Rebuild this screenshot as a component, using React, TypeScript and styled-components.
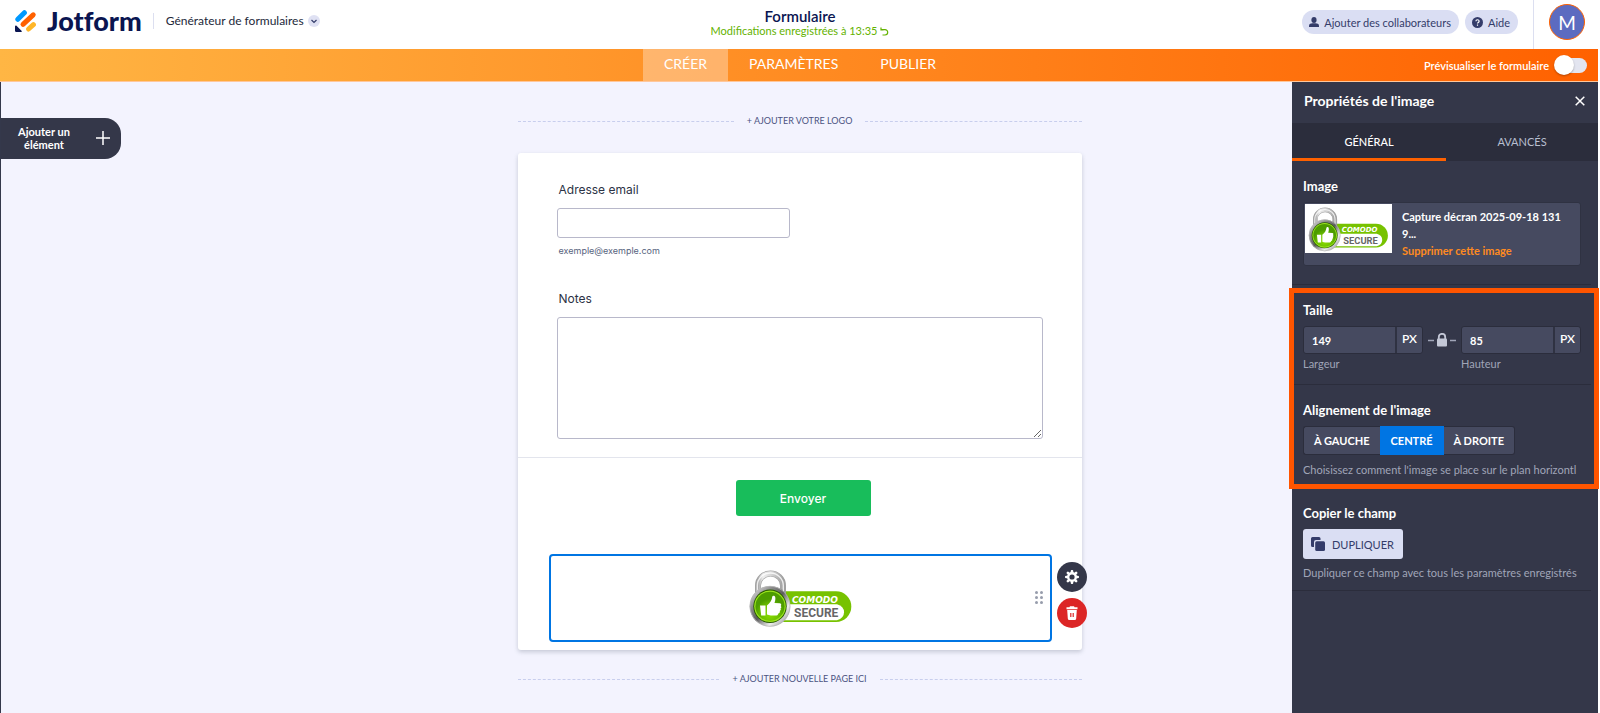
import React, { useState } from "react";
import styled, { createGlobalStyle } from "styled-components";

const ui = `Lato, "Liberation Sans", sans-serif`;
const formFont = `Inter, "Liberation Sans", sans-serif`;

const GlobalStyle = createGlobalStyle`
  *, *::before, *::after { box-sizing: border-box; }
  html, body, #root { min-height: 100vh; }
  body { margin: 0; background: #fff; color: #0a1551; font-family: ${ui}; }
  #root { display: flex; }
  button, input, textarea { font-family: inherit; margin: 0; }
  button { border: 0; padding: 0; cursor: pointer; }
  a { text-decoration: none; }
`;

const Page = styled.div`
  flex: 1;
  min-width: 0;
  display: flex;
  flex-direction: column;
  padding-right: 2px;
`;

/* Header */
const Header = styled.header`
  height: 49px;
  display: grid;
  grid-template-columns: 1fr auto 1fr;
  padding-left: 2px;
`;
const HeaderLeft = styled.div`
  display: flex;
  align-items: center;
  padding: 0 0 7px 13px;
`;
const Brand = styled.a`
  display: flex;
  align-items: center;
  gap: 10px;
  color: #0a1551;
  font-size: 27px;
  line-height: 32px;
  font-weight: 900;
  font-variant-ligatures: none;
`;
const ProductMenu = styled.button`
  display: flex;
  align-items: center;
  gap: 4px;
  margin-left: 11px;
  padding-left: 12px;
  border-left: 1px solid #dcdff0;
  background: none;
  color: #23283a;
  font-size: 12px;
  line-height: 16px;
`;
const HeaderCenter = styled.div`
  text-align: center;
  padding-top: 8px;
`;
const FormTitle = styled.h1`
  margin: 0;
  font-size: 15px;
  line-height: 17px;
  font-weight: 600;
`;
const SaveState = styled.p`
  display: flex;
  align-items: center;
  gap: 3px;
  margin: 0;
  color: #64b200;
  font-size: 11px;
  line-height: 12px;
`;
const HeaderRight = styled.div`
  display: flex;
  justify-content: flex-end;
  gap: 6px;
`;
const PillButton = styled.button`
  display: flex;
  align-items: center;
  gap: 5px;
  height: 24px;
  margin-top: 10px;
  padding: 0 8px 0 7px;
  border-radius: 12px;
  background: #dadef3;
  color: #343c6a;
  font-size: 11px;
`;
const Account = styled.div`
  margin-left: 9px;
  padding: 4px 13px 0 15px;
  border-left: 1px solid #dcdff0;
`;
const Avatar = styled.button`
  width: 36px;
  height: 36px;
  border: 1px solid #ff6100;
  border-radius: 50%;
  background: #5c6bc0;
  color: #fff;
  font-size: 19px;
`;

/* Navigation bar */
const NavBar = styled.nav`
  height: 33px;
  display: grid;
  grid-template-columns: 1fr auto 1fr;
  padding-left: 2px;
  border-bottom: 1px solid #ffc79b;
  background: linear-gradient(90deg, #ffb644, #ff6100);
`;
const NavTabs = styled.div`
  grid-column: 2;
  display: flex;
`;
const NavTab = styled.a<{ $active?: boolean }>`
  padding: 0 21px;
  background: ${(p) => (p.$active ? "rgba(255, 255, 255, 0.32)" : "transparent")};
  color: #fff;
  font-size: 14px;
  line-height: 30px;
`;
const Preview = styled.label`
  display: flex;
  align-items: center;
  justify-content: flex-end;
  gap: 6px;
  padding-right: 11px;
  color: #fff;
  font-size: 11px;
  font-weight: 600;
`;
const Toggle = styled.input`
  appearance: none;
  position: relative;
  width: 32px;
  height: 15px;
  border-radius: 8px;
  background: #e3e5f0;
  &::before {
    content: "";
    position: absolute;
    top: -3px;
    left: ${(p) => (p.checked ? "13px" : "-1px")};
    width: 20px;
    height: 20px;
    border-radius: 50%;
    background: #fff;
    box-shadow: 0 1px 2px rgba(0, 0, 0, 0.3);
  }
`;

/* Workspace */
const Workspace = styled.div`
  flex: 1;
  display: grid;
  grid-template-columns: minmax(306px, 1fr) minmax(0, 564px) minmax(306px, 1fr);
  border-left: 1px solid #34384b;
  background: #f3f3fe;
`;
const AddElement = styled.button`
  display: flex;
  align-items: center;
  justify-content: space-between;
  width: 120px;
  height: 41px;
  margin-top: 36px;
  padding: 0 11px 2px 16px;
  border-radius: 0 16px 16px 0;
  background: #343749;
  color: #fff;
  font-size: 11px;
  line-height: 13px;
  font-weight: 700;
  span { width: 54px; text-align: center; }
`;
const Canvas = styled.main`
  display: flex;
  flex-direction: column;
`;
const CanvasTop = styled.div`
  display: grid;
  padding-top: 33px;
`;
const DashedAction = styled.button`
  display: flex;
  align-items: center;
  gap: 13px;
  height: 12px;
  background: none;
  color: #4c5382;
  font-size: 9px;
  line-height: 12px;
  &::before, &::after {
    content: "";
    flex: 1;
    border-top: 1px dashed #c8ceed;
  }
`;
const FormCard = styled.form`
  position: relative;
  margin: 26px 0 23px;
  border-radius: 3px;
  background: #fff;
  box-shadow: 0 2px 4px rgba(84, 95, 111, 0.28);
  color: #2c3345;
  font-family: ${formFont};
`;
const Fields = styled.div`
  padding: 28px 39px 18px;
  border-bottom: 1px solid #e3e5ed;
`;
const FieldLabel = styled.label`
  display: block;
  padding-left: 2px;
  font-size: 12px;
  line-height: 18px;
`;
const EmailInput = styled.input`
  display: block;
  width: 233px;
  max-width: 100%;
  height: 30px;
  margin-top: 9px;
  border: 1px solid #b8b8ca;
  border-radius: 3px;
`;
const SubLabel = styled.p`
  margin: 7px 0 33px 2px;
  color: #57647e;
  font-size: 9px;
  line-height: 12px;
`;
const NotesArea = styled.textarea`
  display: block;
  width: 100%;
  height: 122px;
  margin-top: 9px;
  border: 1px solid #b8b8ca;
  border-radius: 3px;
`;
const SubmitRow = styled.div`
  padding-left: 7px;
`;
const Submit = styled.button`
  display: block;
  width: 135px;
  height: 36px;
  margin: 22px auto 38px;
  border-radius: 3px;
  background: #18bd5b;
  color: #fff;
  font-family: ${formFont};
  font-size: 12px;
  font-weight: 500;
`;
const SelectedImage = styled.div`
  display: grid;
  grid-template-columns: 1fr 110px 1fr;
  align-items: center;
  height: 88px;
  margin: 0 30px 0 31px;
  padding-bottom: 2px;
  border: 2px solid #0075e3;
  border-radius: 4px;
`;
const DragHandle = styled.svg`
  justify-self: end;
  margin-right: 6px;
`;
const CardEnd = styled.div`
  height: 8px;
`;
const ItemActions = styled.div`
  position: absolute;
  right: -5px;
  bottom: 22px;
  display: grid;
  gap: 6px;
`;
const RoundButton = styled.button<{ $danger?: boolean }>`
  display: grid;
  place-items: center;
  width: 30px;
  height: 30px;
  border-radius: 50%;
  background: ${(p) => (p.$danger ? "#dc2626" : "#343749")};
`;

/* Properties panel */
const Panel = styled.aside`
  justify-self: end;
  width: 306px;
  background: #343749;
  color: #fff;
`;
const PanelHeader = styled.div`
  display: flex;
  align-items: center;
  justify-content: space-between;
  height: 41px;
  padding: 0 13px 3px 12px;
`;
const PanelTitle = styled.h2`
  margin: 0;
  font-size: 14px;
  line-height: 18px;
  font-weight: 700;
`;
const CloseButton = styled.button`
  display: flex;
  background: none;
`;
const PanelTabs = styled.div`
  display: grid;
  grid-template-columns: 154px 1fr;
  background: #2b2d3c;
`;
const PanelTab = styled.button<{ $active?: boolean }>`
  height: 38px;
  padding-top: 1px;
  border-bottom: 3px solid ${(p) => (p.$active ? "#ff6100" : "transparent")};
  background: none;
  color: ${(p) => (p.$active ? "#fff" : "#b8bfd0")};
  font-size: 11px;
  font-weight: ${(p) => (p.$active ? 500 : 400)};
`;
const Section = styled.section<{ $end?: number }>`
  margin-right: 7px;
  padding: 17px 10px ${(p) => p.$end ?? 10}px 11px;
  border-bottom: 1px solid #2b2d3c;
`;
const SectionTitle = styled.h3`
  margin: 0 0 8px;
  font-size: 13px;
  line-height: 16px;
  font-weight: 700;
`;
const Hint = styled.p`
  margin: 0;
  color: #a0a5b8;
  font-size: 11px;
  line-height: 14px;
  white-space: nowrap;
`;
const FileCard = styled.div`
  display: flex;
  gap: 10px;
  height: 64px;
  padding: 1px;
  border: 1px solid #2f3242;
  border-radius: 3px;
  background: #464a60;
  font-size: 11px;
  line-height: 17px;
  font-weight: 700;
`;
const Thumb = styled.div`
  width: 87px;
  height: 49px;
  flex: none;
  background: #fff;
`;
const FileText = styled.div`
  flex: 1;
  padding-top: 4px;
`;
const RemoveLink = styled.a`
  display: block;
  color: #ff8a1f;
`;
const Highlighted = styled.div`
  position: relative;
  &::after {
    content: "";
    position: absolute;
    inset: 3px -1px -1px -3px;
    border: 5px solid #ff5500;
    pointer-events: none;
  }
`;
const SizeRow = styled.div`
  display: grid;
  grid-template-columns: 120px 1fr 120px;
`;
const SizeLabel = styled.label`
  display: block;
  margin-top: 3px;
  color: #a0a5b8;
  font-size: 11px;
  line-height: 14px;
`;
const Measure = styled.div`
  display: grid;
  grid-template-columns: 1fr 27px;
  height: 28px;
  border: 1px solid #2b2d3c;
  border-radius: 3px;
  background: #464a60;
`;
const Unit = styled.span`
  border-left: 2px solid #2f3242;
  text-align: center;
  font-size: 12px;
  line-height: 24px;
  font-weight: 600;
`;
const MeasureInput = styled.input`
  min-width: 0;
  padding: 0 8px;
  border: 0;
  background: none;
  color: #fff;
  font-size: 11px;
  font-weight: 700;
`;
const LockCell = styled.div`
  display: grid;
  place-items: center;
  height: 28px;
`;
const Segments = styled.div`
  display: flex;
  width: max-content;
  margin-bottom: 8px;
`;
const Segment = styled.button<{ $active?: boolean }>`
  height: 29px;
  padding: 0 10px;
  border: 1px solid ${(p) => (p.$active ? "#0075e3" : "#2b2d3c")};
  background: ${(p) => (p.$active ? "#0075e3" : "#464a60")};
  color: #fff;
  font-size: 11px;
  line-height: 24px;
  font-weight: 700;
  &:first-child { border-radius: 3px 0 0 3px; border-right: 0; }
  &:last-child { border-radius: 0 3px 3px 0; border-left: 0; }
`;
const Duplicate = styled.button`
  display: flex;
  align-items: center;
  gap: 7px;
  width: 100px;
  height: 30px;
  margin-bottom: 7px;
  padding-left: 8px;
  border-radius: 3px;
  background: #dadef3;
  color: #343c6a;
  font-size: 11px;
`;

function LogoMark() {
  return (
    <svg width="22" height="22" viewBox="0 0 22 22" fill="none" strokeLinecap="round" strokeWidth="5">
      <path d="M2.8 9.3 9.4 2.7" stroke="#0099ff" />
      <path d="M8 14.3 18.2 4.8" stroke="#ff6100" />
      <path d="M13.6 19 18.4 14.7" stroke="#ffb629" />
      <path d="M0 16.4c0-.9.9-1.3 1.5-.7l5 5c.6.6.2 1.4-.6 1.4H1.4C.6 22.1 0 21.5 0 20.8z" fill="#0a1551" />
    </svg>
  );
}

function SecureBadge({ width, height, id }: { width: number; height: number; id: string }) {
  return (
    <svg width={width} height={height} viewBox="0 0 110 63" role="img" aria-label="Comodo Secure">
      <defs>
        <linearGradient id={`${id}-steel`} x1="0" y1="0" x2="1" y2="1">
          <stop offset="0" stopColor="#f4f4f4" />
          <stop offset=".3" stopColor="#8b8b8b" />
          <stop offset=".5" stopColor="#5c5c5c" />
          <stop offset=".72" stopColor="#ededed" />
          <stop offset="1" stopColor="#777" />
        </linearGradient>
        <linearGradient id={`${id}-bow`} x1="0" x2="1">
          <stop offset="0" stopColor="#a5a5a5" />
          <stop offset=".2" stopColor="#f0f0f0" />
          <stop offset=".6" stopColor="#cfcfcf" />
          <stop offset="1" stopColor="#a0a0a0" />
        </linearGradient>
        <radialGradient id={`${id}-green`} cy=".75">
          <stop offset="0" stopColor="#8ee000" />
          <stop offset=".6" stopColor="#6dc000" />
          <stop offset="1" stopColor="#4d9c00" />
        </radialGradient>
      </defs>
      <path d="M25 25.3h66a15.3 15.3 0 0 1 0 30.6H25z" fill="#77c200" />
      <path d="M40 38.3h52q7 2 7 8t-7 8H40z" fill="#fff" />
      <path d="M13 29V19.5a12.500 12 0 0 1 25 0V29" fill="none" stroke="#a0a0a0" strokeWidth="6" />
      <path d="M13 29V19.5a12.500 12 0 0 1 25 0V29" fill="none" stroke={`url(#${id}-bow)`} strokeWidth="4.800" />
      <path d="M12.300 26V19.5a13 12.500 0 0 1 26 0V26" fill="none" stroke="#fff" strokeWidth="1.400" opacity=".8" />
      <circle cx="25" cy="40.3" r="20.3" fill={`url(#${id}-steel)`} />
      <circle cx="25" cy="40.3" r="20" fill="none" stroke="#b5b5b5" strokeWidth=".8" />
      <circle cx="25" cy="40.3" r="16.7" fill="#275a00" />
      <circle cx="25" cy="40.3" r="15.8" fill="#9be51c" />
      <circle cx="25" cy="40.3" r="14.6" fill={`url(#${id}-green)`} />
      <path d="M15 39.6h5.500v9.800h-4.300zM22 39.500c3.200-2.500 4.800-5.200 5.300-9 .3-1.400 2.600-1 2.900.5.400 2 .1 3.800-.7 6l5.300.3c1.600.2 1.800 1.800.8 2.600 1 .8.900 2-.2 2.600.8.9.4 2-.7 2.500.5 1-.1 2.200-1.400 2.500-.3 1.600-1.300 2.100-2.800 2.100-3 0-6.500-.2-8.500-1.100z" fill="#fff" />
      <text x="47" y="36.600" fill="#fff" fontFamily="DejaVu Sans, sans-serif" fontSize="9" fontWeight="700" fontStyle="italic">COMODO</text>
      <text x="49" y="50.800" fill="#666" fontFamily="Roboto, sans-serif" fontSize="12" fontWeight="700">SECURE</text>
    </svg>
  );
}

export default function App() {
  const [preview, setPreview] = useState(false);
  return (
    <>
      <GlobalStyle />
      <Page>
        <Header>
          <HeaderLeft>
            <Brand href="#"><LogoMark />Jotform</Brand>
            <ProductMenu type="button">
              Générateur de formulaires
              <svg width="12" height="12" viewBox="0 0 12 12">
                <circle cx="6" cy="6" r="6" fill="#dfe1f3" />
                <path d="m3.500 5 2.500 2.500L8.500 5" fill="none" stroke="#343c6a" strokeWidth="1.200" />
              </svg>
            </ProductMenu>
          </HeaderLeft>
          <HeaderCenter>
            <FormTitle>Formulaire</FormTitle>
            <SaveState>
              Modifications enregistrées à 13:35
              <svg width="9" height="9" viewBox="0 0 9 9" fill="none" stroke="#64b200" strokeWidth="1.200">
                <path d="M1 .5v2.500h2.500M1.200 2.600H5a2.700 2.700 0 0 1 0 5.400H2.500" />
              </svg>
            </SaveState>
          </HeaderCenter>
          <HeaderRight>
            <PillButton type="button">
              <svg width="10" height="11" viewBox="0 0 10 11" fill="#343c6a">
                <ellipse cx="5" cy="3" rx="2.600" ry="3" />
                <path d="M0 10V8.500C0 7 2 6.300 3.300 6.300h3.400C8 6.300 10 7 10 8.500V10z" />
              </svg>
              Ajouter des collaborateurs
            </PillButton>
            <PillButton type="button">
              <svg width="11" height="11" viewBox="0 0 11 11">
                <circle cx="5.500" cy="5.500" r="5.500" fill="#343c6a" />
                <path d="M3.900 4.300C3.900 2.200 7.100 2.300 7.100 4.200c0 1.200-1.600 1.200-1.600 2.300M5.500 7.500v1.200" fill="none" stroke="#fff" strokeWidth="1.200" />
              </svg>
              Aide
            </PillButton>
            <Account><Avatar type="button">M</Avatar></Account>
          </HeaderRight>
        </Header>
        <NavBar>
          <NavTabs>
            <NavTab href="#" $active>CRÉER</NavTab>
            <NavTab href="#">PARAMÈTRES</NavTab>
            <NavTab href="#">PUBLIER</NavTab>
          </NavTabs>
          <Preview>
            Prévisualiser le formulaire
            <Toggle type="checkbox" checked={preview} onChange={(e) => setPreview(e.target.checked)} />
          </Preview>
        </NavBar>
        <Workspace>
          <div>
            <AddElement type="button">
              <span>Ajouter un élément</span>
              <svg width="14" height="14" viewBox="0 0 14 14" stroke="#fff" strokeWidth="1.500"><path d="M7 0v14M0 7h14" /></svg>
            </AddElement>
          </div>
          <Canvas>
            <CanvasTop>
              <DashedAction type="button">+ AJOUTER VOTRE LOGO</DashedAction>
            </CanvasTop>
            <FormCard onSubmit={(e) => e.preventDefault()}>
              <Fields>
                <FieldLabel htmlFor="email">Adresse email</FieldLabel>
                <EmailInput id="email" type="email" />
                <SubLabel>exemple@exemple.com</SubLabel>
                <FieldLabel htmlFor="notes">Notes</FieldLabel>
                <NotesArea id="notes" />
              </Fields>
              <SubmitRow><Submit type="submit">Envoyer</Submit></SubmitRow>
              <SelectedImage>
                <span />
                <SecureBadge width={110} height={63} id="main" />
                <DragHandle width="9" height="13" viewBox="0 0 9 13" fill="#979dac">
                  {[1.5, 6.5, 11.5].map((y) => [1.5, 6.5].map((x) => <circle key={`${x}-${y}`} cx={x} cy={y} r="1.500" />))}
                </DragHandle>
              </SelectedImage>
              <CardEnd />
              <ItemActions>
                <RoundButton type="button" aria-label="Paramètres du champ">
                  <svg width="14" height="14" viewBox="0 0 14 14">
                    <path d="M7 1.200v11.600M1.200 7h11.600M2.900 2.900l8.200 8.200M11.100 2.900l-8.200 8.200" stroke="#fff" strokeWidth="2.600" strokeLinecap="round" />
                    <circle cx="7" cy="7" r="5" fill="#fff" />
                    <circle cx="7" cy="7" r="2.600" fill="#343749" />
                  </svg>
                </RoundButton>
                <RoundButton type="button" aria-label="Supprimer le champ" $danger>
                  <svg width="12" height="14" viewBox="0 0 12 14">
                    <path d="M4 .300h4l.6.900H11.500v2H.5v-2h2.900zM1.200 4h9.600l-.6 8.500q-.1 1.500-1.500 1.500H3.300q-1.400 0-1.500-1.500z" fill="#fff" />
                    <path d="M4.800 7v4M7.200 7v4" stroke="#dc2626" strokeWidth="1.200" />
                  </svg>
                </RoundButton>
              </ItemActions>
            </FormCard>
            <DashedAction type="button">+ AJOUTER NOUVELLE PAGE ICI</DashedAction>
          </Canvas>
          <Panel>
            <PanelHeader>
              <PanelTitle>Propriétés de l'image</PanelTitle>
              <CloseButton type="button" aria-label="Fermer">
                <svg width="10" height="10" viewBox="0 0 10 10" stroke="#fff" strokeWidth="1.500"><path d="m.7.7 8.600 8.600M9.300.7.7 9.300" /></svg>
              </CloseButton>
            </PanelHeader>
            <PanelTabs>
              <PanelTab type="button" $active>GÉNÉRAL</PanelTab>
              <PanelTab type="button">AVANCÉS</PanelTab>
            </PanelTabs>
            <Section $end={18}>
              <SectionTitle>Image</SectionTitle>
              <FileCard>
                <Thumb><SecureBadge width={86} height={49} id="thumb" /></Thumb>
                <FileText>
                  Capture décran 2025-09-18 131<br />9...
                  <RemoveLink href="#">Supprimer cette image</RemoveLink>
                </FileText>
              </FileCard>
            </Section>
            <Highlighted>
              <Section $end={13}>
                <SectionTitle>Taille</SectionTitle>
                <SizeRow>
                  <div>
                    <Measure><MeasureInput id="width" defaultValue="149" /><Unit>PX</Unit></Measure>
                    <SizeLabel htmlFor="width">Largeur</SizeLabel>
                  </div>
                  <LockCell>
                    <svg width="28" height="14" viewBox="0 0 28 14">
                      <path d="M0 7.500h6M22 7.500h6" stroke="#a0a5b8" strokeWidth="1.500" />
                      <path d="M10.800 6V4a3.200 3.200 0 0 1 6.400 0v2" fill="none" stroke="#c3c7d6" strokeWidth="1.800" />
                      <rect x="9" y="5.500" width="10" height="8" rx="1" fill="#c3c7d6" />
                    </svg>
                  </LockCell>
                  <div>
                    <Measure><MeasureInput id="height" defaultValue="85" /><Unit>PX</Unit></Measure>
                    <SizeLabel htmlFor="height">Hauteur</SizeLabel>
                  </div>
                </SizeRow>
              </Section>
              <Section>
                <SectionTitle>Alignement de l'image</SectionTitle>
                <Segments>
                  <Segment type="button">À GAUCHE</Segment>
                  <Segment type="button" $active>CENTRÉ</Segment>
                  <Segment type="button">À DROITE</Segment>
                </Segments>
                <Hint>Choisissez comment l'image se place sur le plan horizontl</Hint>
              </Section>
            </Highlighted>
            <Section>
              <SectionTitle>Copier le champ</SectionTitle>
              <Duplicate type="button">
                <svg width="14" height="14" viewBox="0 0 14 14" fill="#343c6a">
                  <path d="M1.500 0H8q1.500 0 1.500 1.500V3H5Q3 3 3 5v5H1.500Q0 10 0 8.500v-7Q0 0 1.500 0z" />
                  <rect x="4.200" y="4.200" width="9.800" height="9.800" rx="1.500" />
                </svg>
                DUPLIQUER
              </Duplicate>
              <Hint>Dupliquer ce champ avec tous les paramètres enregistrés</Hint>
            </Section>
          </Panel>
        </Workspace>
      </Page>
    </>
  );
}
